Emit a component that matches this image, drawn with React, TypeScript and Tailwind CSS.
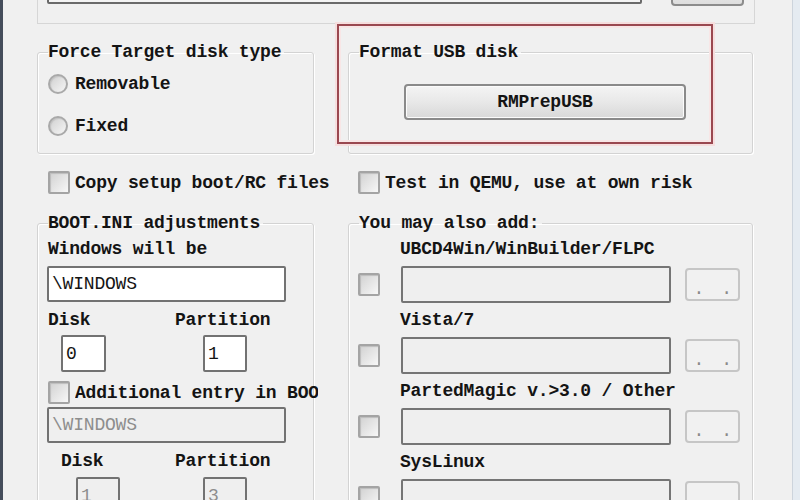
import React from "react";

const mono = "font-['Liberation_Mono','DejaVu_Sans_Mono',monospace] text-[18px] leading-[20px] tracking-[-0.2px] font-bold text-[#141414]";

function Check() {
  return (
    <span className="block w-[22px] h-[23px] shrink-0 rounded-[2px] border-2 border-[#a4a4a4] bg-linear-to-br from-[#d2d2d2] to-[#f7f7f7] shadow-[inset_1px_1px_1px_#bdbdbd]" />
  );
}

function Radio() {
  return (
    <span className="block w-[20px] h-[20px] shrink-0 rounded-full border-2 border-[#a9a9a9] bg-linear-to-br from-[#d0d0d0] to-[#f6f6f6] shadow-[inset_1px_1px_1px_#c4c4c4]" />
  );
}

function Group({ title, className, children }: { title: string; className: string; children?: React.ReactNode }) {
  return (
    <fieldset className={"min-w-0 border border-[#d3d3d3] rounded-[3px] shadow-[inset_1px_1px_0_#ffffff,1px_1px_0_#ffffff] " + className}>
      <legend className="ml-[10px] pr-[3px] leading-[20px]">{title}</legend>
      {children}
    </fieldset>
  );
}

function Field({ value, className, disabled }: { value?: string; className: string; disabled?: boolean }) {
  return (
    <div
      className={
        "flex items-center pl-[3px] border-2 rounded-[2px] border-[#727272] " +
        (disabled ? "bg-[#efefef] text-[#8d8d8d] font-normal " : "bg-white ") +
        className
      }
    >
      {value}
    </div>
  );
}

function AddRow({ label }: { label: string }) {
  return (
    <div className="flex flex-col">
      <div className="pl-[51px] mt-[7px] whitespace-nowrap">{label}</div>
      <div className="flex items-center mt-[7px] pl-[9px]">
        <Check />
        <div className="ml-[21px] w-[270px] h-[37px] border-2 rounded-[2px] border-[#757575] bg-[#efefef]" />
        <div className="ml-[14px] w-[55px] h-[33px] rounded-[4px] border-2 border-[#c6c6c6] bg-[#f1f1f1] flex items-end justify-end pr-[3px] pb-[4px] text-[#8a8a8a] font-normal tracking-[3px] leading-[12px]">
          . .
        </div>
      </div>
    </div>
  );
}

export default function App() {
  return (
    <div className={"w-[800px] h-[500px] overflow-hidden flex bg-[#f0f0f0] " + mono}>
      <div className="w-[3px] shrink-0 bg-[#454d5b]" />
      <div className="relative w-[789px] shrink-0 flex flex-col">
        {/* top strip: bottom of the previous group */}
        <div className="ml-[34px] w-[718px] h-[24px] shrink-0 overflow-hidden border-x border-b border-[#d6d6d6] flex items-end">
          <div className="ml-[9px] mb-[19px] w-[595px] h-[30px] shrink-0 border-2 rounded-[2px] border-[#6a6a6a] bg-[#f4f4f4]" />
          <div className="ml-[29px] mb-[17px] w-[73px] h-[30px] shrink-0 rounded-[4px] border-2 border-[#8c8c8c] bg-linear-to-b from-[#f2f2f2] to-[#dedede]" />
        </div>

        <div className="grid grid-cols-[277px_405px] gap-x-[34px] pl-[34px] mt-[18px]">
          <Group title="Force Target disk type" className="h-[112px]">
            <div className="flex flex-col gap-[20px] pl-[10px] pt-[11px]">
              <label className="flex items-center gap-[7px] h-[22px]">
                <Radio />
                <span>Removable</span>
              </label>
              <label className="flex items-center gap-[7px] h-[22px]">
                <Radio />
                <span>Fixed</span>
              </label>
            </div>
          </Group>
          <Group title="Format USB disk" className="h-[112px]">
            <div className="ml-[55px] mt-[22px] w-[282px] h-[36px] rounded-[4px] border-2 border-[#8a8a8a] bg-linear-to-b from-[#f4f4f4] via-[#e8e8e8] to-[#d8d8d8] flex items-center justify-center shadow-[inset_0_0_0_1px_#fbfbfb]">
              RMPrepUSB
            </div>
          </Group>
        </div>

        <div className="grid grid-cols-[277px_405px] gap-x-[34px] pl-[34px] mt-[17px]">
          <label className="flex items-center gap-[5px] pl-[11px] h-[23px] whitespace-nowrap">
            <Check />
            <span>Copy setup boot/RC files</span>
          </label>
          <label className="flex items-center gap-[5px] pl-[10px] h-[23px] whitespace-nowrap">
            <Check />
            <span>Test in QEMU, use at own risk</span>
          </label>
        </div>

        <div className="grid grid-cols-[277px_405px] gap-x-[34px] pl-[34px] mt-[19px]">
          <Group title="BOOT.INI adjustments" className="h-[320px]">
            <div className="flex flex-col pl-[10px]">
              <div className="mt-[6px]">Windows will be</div>
              <Field value="\WINDOWS" className="mt-[7px] -ml-[1px] w-[239px] h-[36px] font-normal" />
              <div className="mt-[8px] flex">
                <span className="w-[127px]">Disk</span>
                <span>Partition</span>
              </div>
              <div className="mt-[5px] flex">
                <Field value="0" className="ml-[13px] w-[45px] h-[37px] font-normal" />
                <Field value="1" className="ml-[97px] w-[44px] h-[37px] font-normal" />
              </div>
              <label className="mt-[9px] flex items-center gap-[5px] h-[23px]">
                <Check />
                <span className="w-[243px] shrink-0 overflow-hidden whitespace-nowrap">Additional entry in BOOT.INI</span>
              </label>
              <Field value="\WINDOWS" disabled className="mt-[3px] -ml-[1px] w-[239px] h-[36px]" />
              <div className="mt-[8px] flex">
                <span className="ml-[13px] w-[114px]">Disk</span>
                <span>Partition</span>
              </div>
              <div className="mt-[6px] flex">
                <Field value="1" disabled className="ml-[28px] w-[44px] h-[37px]" />
                <Field value="3" disabled className="ml-[83px] w-[44px] h-[37px]" />
              </div>
            </div>
          </Group>
          <Group title="You may also add:" className="h-[320px]">
            <div className="flex flex-col -mt-[1px]">
              <AddRow label="UBCD4Win/WinBuilder/FLPC" />
              <AddRow label="Vista/7" />
              <AddRow label="PartedMagic v.>3.0 / Other" />
              <AddRow label="SysLinux" />
            </div>
          </Group>
        </div>

        {/* red annotation frame around the format group */}
        <div className="absolute left-[334px] top-[24px] w-[376px] h-[120px] border-2 border-[#9a4850] shadow-[0_0_0_2px_#f6dede,inset_0_0_0_2px_#f8e6e6]" />
      </div>
      <div className="w-[8px] shrink-0 border-l border-[#cdd4dc] bg-[#e5ebf1]" />
    </div>
  );
}
